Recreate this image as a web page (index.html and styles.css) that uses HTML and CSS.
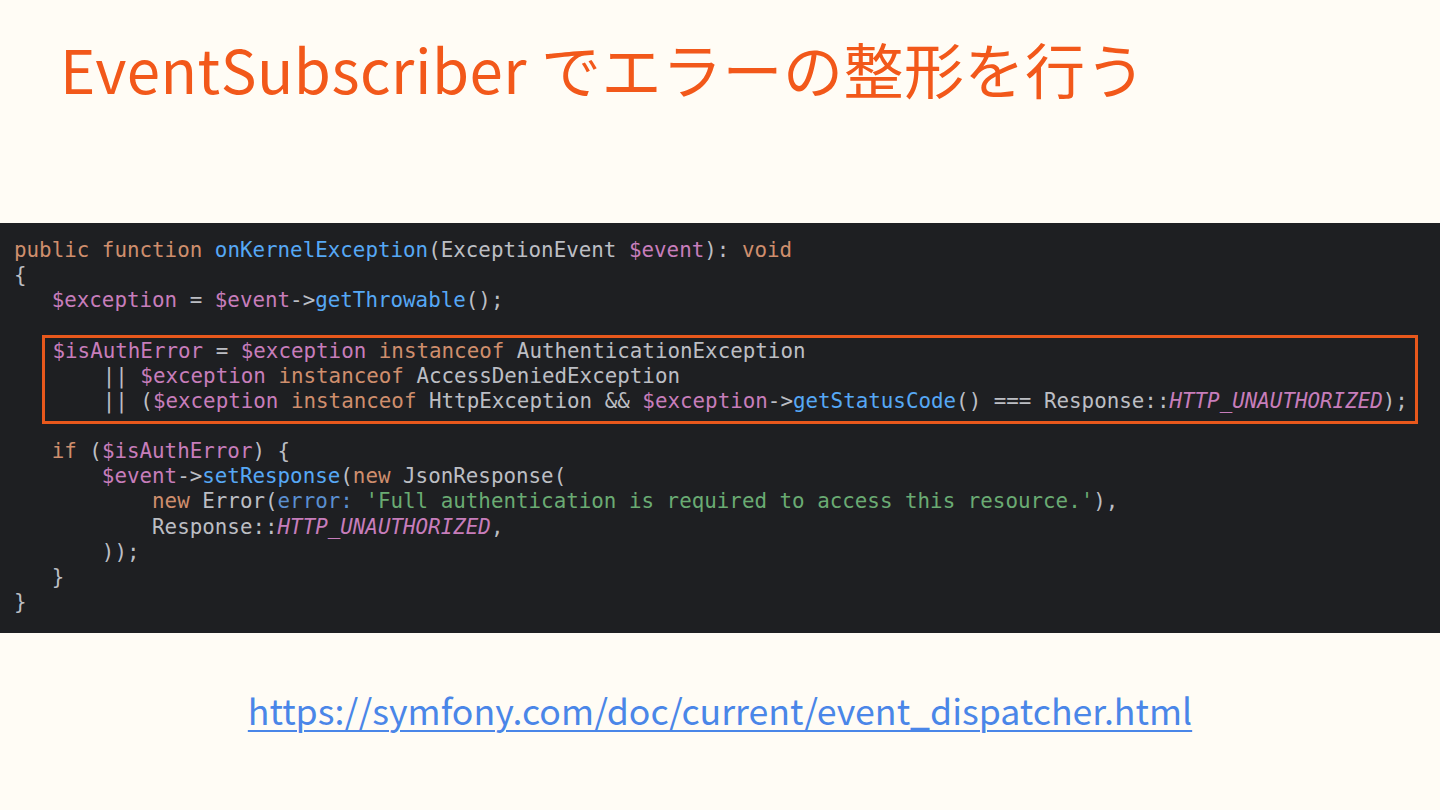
FILE: index.html
```html
<!DOCTYPE html>
<html lang="ja">
<head>
    <meta charset="UTF-8">
    <meta name="viewport" content="width=device-width, initial-scale=1.0">
    <title>EventSubscriber でエラーの整形を行う</title>
    <link rel="stylesheet" href="styles.css">
</head>
<body>
    <h1 class="slide-title">EventSubscriber でエラーの整形を行う</h1>

    <div class="code">
        <div class="line"><span class="kw">public</span> <span class="kw">function</span> <span class="fn">onKernelException</span>(ExceptionEvent <span class="var">$event</span>): <span class="kw">void</span></div>
        <div class="line">{</div>
        <div class="line">   <span class="var">$exception</span> = <span class="var">$event</span>-&gt;<span class="fn">getThrowable</span>();</div>
        <div class="line"> </div>
        <div class="highlight">
            <div class="line"><span class="var">$isAuthError</span> = <span class="var">$exception</span> <span class="kw">instanceof</span> AuthenticationException</div>
            <div class="line">    || <span class="var">$exception</span> <span class="kw">instanceof</span> AccessDeniedException</div>
            <div class="line">    || (<span class="var">$exception</span> <span class="kw">instanceof</span> HttpException &amp;&amp; <span class="var">$exception</span>-&gt;<span class="fn">getStatusCode</span>() === Response::<span class="const">HTTP_UNAUTHORIZED</span>);</div>
        </div>
        <div class="line"> </div>
        <div class="line">   <span class="kw">if</span> (<span class="var">$isAuthError</span>) {</div>
        <div class="line">       <span class="var">$event</span>-&gt;<span class="fn">setResponse</span>(<span class="kw">new</span> JsonResponse(</div>
        <div class="line">           <span class="kw">new</span> Error(<span class="arg">error:</span> <span class="str">'Full authentication is required to access this resource.'</span>),</div>
        <div class="line">           Response::<span class="const">HTTP_UNAUTHORIZED</span>,</div>
        <div class="line">       ));</div>
        <div class="line">   }</div>
        <div class="line">}</div>
    </div>

    <p class="link-row"><a href="https://symfony.com/doc/current/event_dispatcher.html">https://symfony.com/doc/current/event_dispatcher.html</a></p>
</body>
</html>
```

FILE: styles.css
```css
body {
    margin: 0;
    background-color: #fffcf5;
    font-family: "Noto Sans CJK JP", "Noto Sans", sans-serif;
}

.slide-title {
    margin: 0;
    padding: 32px 0 0 60px;
    font-size: 60px;
    line-height: 72px;
    font-weight: 400;
    letter-spacing: 0.5px;
    color: #f2581a;
    height: 72px;
}

.code {
    margin: 119px 0 0 0;
    padding: 15px 14px 18px 14px;
    background-color: #1e1f22;
    color: #bcbec4;
    font-family: "DejaVu Sans Mono", "Liberation Mono", monospace;
    font-size: 20.85px;
    line-height: 25.15px;
}

.line {
    white-space: pre;
    height: 25.15px;
}

.highlight {
    margin: -4px 8px -10.5px 28px;
    padding: 1px 0 7.5px 7.5px;
    border: 3px solid #e8581c;
}

.kw { color: #cf8e6d; }
.fn { color: #56a8f5; }
.var { color: #c77dbb; }
.const { color: #c77dbb; font-style: italic; }
.str { color: #6aab73; }
.arg { color: #5b8fd0; }

.link-row {
    margin: 52px 0 0 0;
    text-align: center;
    font-size: 35.7px;
    line-height: 50px;
}

.link-row a {
    color: #4a86e8;
    text-decoration-thickness: 2px;
    text-underline-offset: 5px;
}
```
